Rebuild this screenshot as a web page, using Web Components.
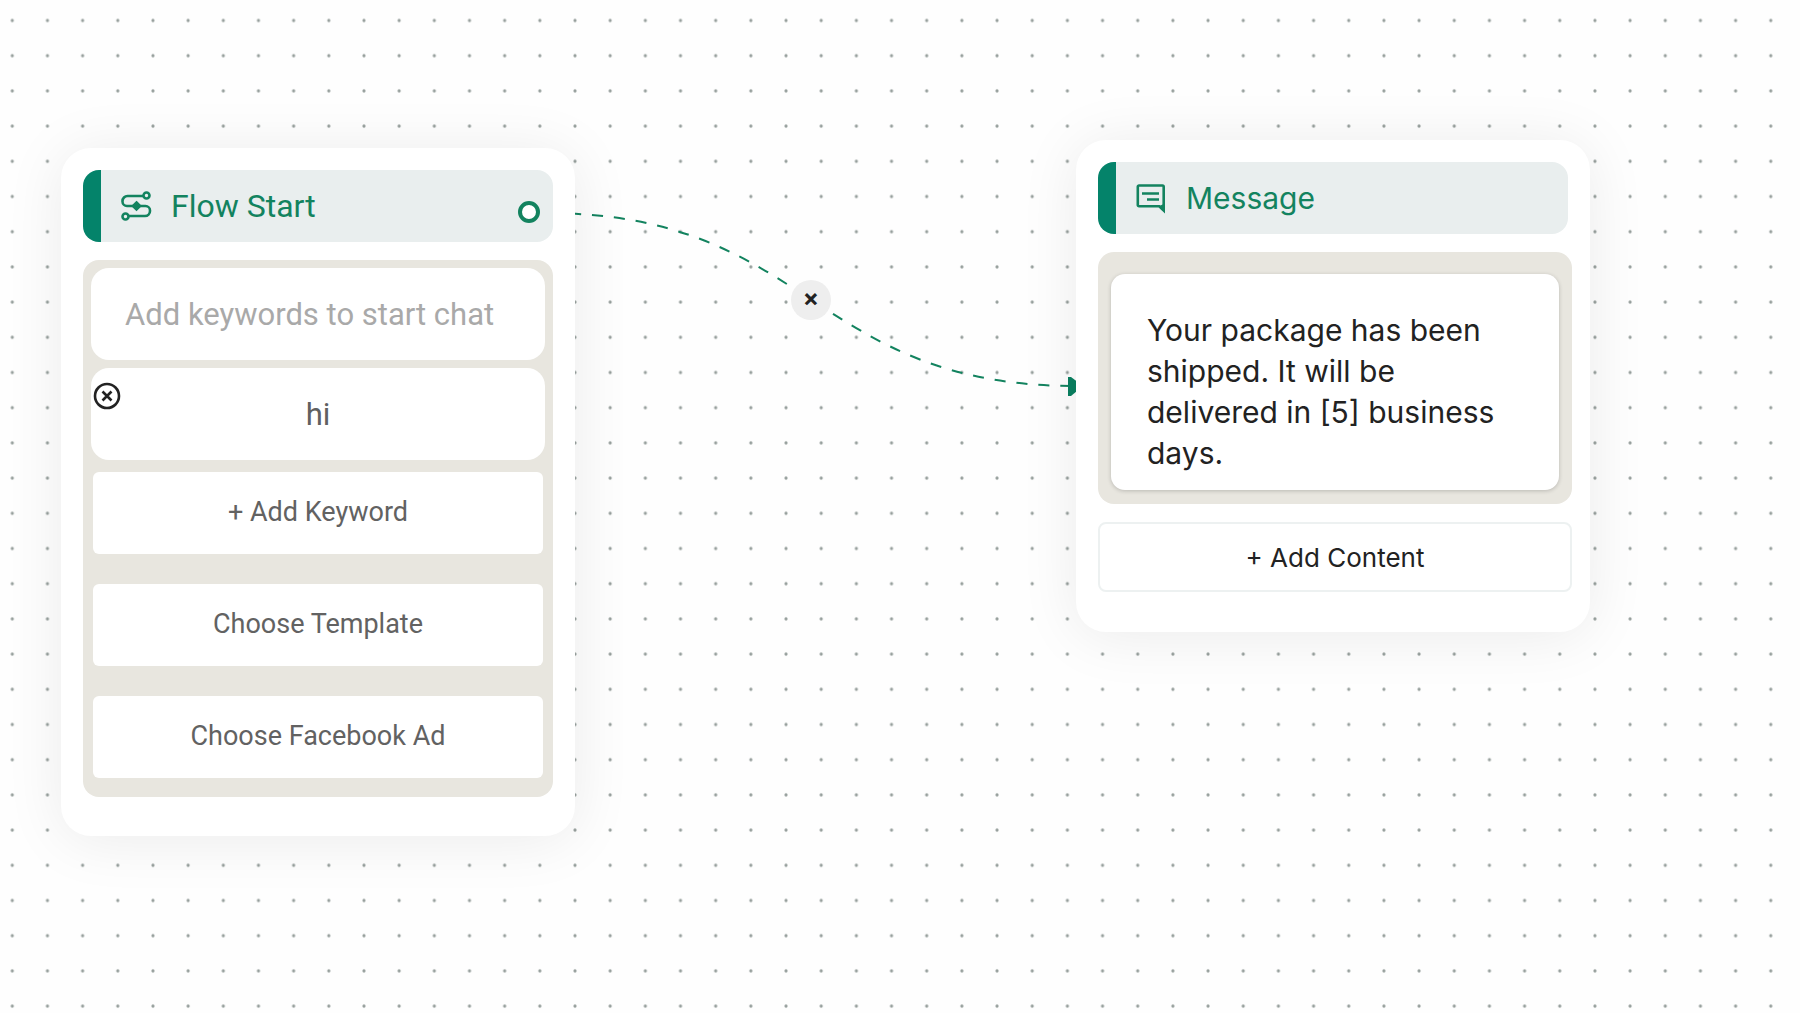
<!DOCTYPE html>
<html lang="en">
<head>
<meta charset="UTF-8">
<meta name="viewport" content="width=device-width, initial-scale=1.0">
<title>Flow Builder</title>
<style>
    body {
        margin: 0;
        background: #fefefe;
        font-family: Roboto, "Liberation Sans", sans-serif;
    }

    /* places of the nodes on the free canvas */
    #start {
        left: 61px;
        top: 148px;
        --title-size: 32px;
        --button-size: 27px;
    }

    #message {
        left: 1076px;
        top: 140px;
        --node-padding: 22px 18px 40px 22px;
        font-family: Inter, "Liberation Sans", sans-serif;
    }

    #message node-header {
        margin-right: 4px;
    }

    #remove-edge {
        left: 791px;
        top: 280px;
    }
</style>
</head>
<body>

<flow-canvas>
    <flow-edge></flow-edge>
    <edge-button id="remove-edge"></edge-button>

    <flow-node id="start">
        <node-header heading="Flow Start" port>
            <svg slot="icon" width="32" height="32" viewBox="0 0 32 32" fill="none" stroke="#13835f" stroke-width="2.6">
                <path d="M24 6H7.500a5 5 0 0 0-5 5v.500a4.500 4.500 0 0 0 4.500 4.500H25.500a4.500 4.500 0 0 1 4.500 4.500v.500a5 5 0 0 1-5 5H8"/>
                <circle cx="26.500" cy="5.500" r="3"/>
                <circle cx="5.500" cy="26.500" r="3"/>
                <path d="M16.500 12.500l3.500 3.500-3.500 3.500-3.500-3.500z" fill="#13835f"/>
            </svg>
        </node-header>
        <node-panel>
            <keyword-field placeholder="Add keywords to start chat" label="New keyword"></keyword-field>
            <keyword-field value="hi" label="Keyword" removable></keyword-field>
            <button-stack>
                <flow-button>+ Add Keyword</flow-button>
                <flow-button>Choose Template</flow-button>
                <flow-button>Choose Facebook Ad</flow-button>
            </button-stack>
        </node-panel>
    </flow-node>

    <flow-node id="message">
        <node-header heading="Message">
            <svg slot="icon" width="32" height="32" viewBox="0 0 32 32" fill="none" stroke="#13835f" stroke-width="2.600">
                <path d="M4 3.500H27.500a1.200 1.200 0 0 1 1.200 1.200V28.500l-4.500-4.300H4a1.200 1.200 0 0 1-1.200-1.200V4.700A1.200 1.200 0 0 1 4 3.500z"/>
                <path d="M28.700 29.500V22l-5 2.200z" fill="#13835f" stroke="none"/>
                <path d="M7 11.500H24M12 17.500H24" stroke-width="2.400"/>
            </svg>
        </node-header>
        <message-panel>Your package has been shipped. It will be delivered in [5] business days.</message-panel>
        <flow-button outlined>+ Add Content</flow-button>
    </flow-node>
</flow-canvas>

<script>
// gắn shadow root và clone nội dung template
const render = (el, html) => {
    const template = document.createElement("template");
    template.innerHTML = html;
    el.attachShadow({ mode: "open" });
    el.shadowRoot.appendChild(template.content.cloneNode(true));
};

class FlowCanvas extends HTMLElement {
    constructor() {
        super();
        render(this, `
        <style>
            :host {
                display: block;
                position: relative;
                min-height: 100vh;
                overflow: hidden;
            }

            .dots {
                position: absolute;
                inset: 0;
                width: 100%;
                height: 100%;
            }
        </style>
        <svg class="dots" aria-hidden="true">
            <defs>
                <pattern id="dots" x="-5.3" y="2.9" width="35.17" height="35.2" patternUnits="userSpaceOnUse">
                    <circle cx="17.6" cy="17.6" r="1.6" fill="#969f9c"/>
                </pattern>
            </defs>
            <rect width="100%" height="100%" fill="url(#dots)"/>
        </svg>
        <slot></slot>
        `);
    }
}

class FlowEdge extends HTMLElement {
    constructor() {
        super();
        render(this, `
        <style>
            :host {
                position: absolute;
                inset: 0;
            }

            svg {
                display: block;
                width: 100%;
                height: 100%;
            }
        </style>
        <svg aria-hidden="true">
            <path d="M545 213C811 213 811 386 1076 386" fill="none" stroke="#13835f" stroke-width="2" stroke-dasharray="11 11" stroke-dashoffset="-3"/>
            <path d="M1068 377h3l12 9-12 10h-3z" fill="#0a8060"/>
        </svg>
        `);
    }
}

class EdgeButton extends HTMLElement {
    constructor() {
        super();
        render(this, `
        <style>
            :host {
                position: absolute;
            }

            button {
                display: flex;
                align-items: center;
                justify-content: center;
                width: 40px;
                height: 40px;
                padding: 0 0 4px;
                border: 0;
                border-radius: 50%;
                background: #eeeeee;
                color: #222;
                font: 700 24px/24px Inter, sans-serif;
                cursor: pointer;
            }
        </style>
        <button aria-label="Remove connection">×</button>
        `);
    }
}

class FlowNode extends HTMLElement {
    constructor() {
        super();
        render(this, `
        <style>
            :host {
                position: absolute;
                display: flex;
                flex-direction: column;
                gap: 18px;
                box-sizing: border-box;
                width: 514px;
                padding: var(--node-padding, 22px 22px 39px);
                border-radius: 30px;
                background: #fff;
                box-shadow: 0 4px 60px rgba(0, 0, 0, 0.08);
            }
        </style>
        <slot></slot>
        `);
    }
}

class NodeHeader extends HTMLElement {
    constructor() {
        super();
        const port = this.hasAttribute("port") ? `<span class="port"></span>` : "";
        render(this, `
        <style>
            :host {
                display: block;
            }

            header {
                display: flex;
                align-items: center;
                gap: 19px;
                box-sizing: border-box;
                height: 72px;
                padding: 0 13px 0 19px;
                border-left: 18px solid #04836a;
                border-radius: 16px;
                background: #e9eeee;
                color: #13835f;
            }

            h2 {
                flex: 1;
                margin: 0;
                font-size: var(--title-size, 30px);
                line-height: 36px;
                font-weight: 400;
            }

            .port {
                box-sizing: border-box;
                width: 22px;
                height: 22px;
                margin-top: 12px;
                border: 4px solid #13835f;
                border-radius: 50%;
                background: #fff;
            }
        </style>
        <header>
            <slot name="icon"></slot>
            <h2>${this.getAttribute("heading")}</h2>
            ${port}
        </header>
        `);
    }
}

class NodePanel extends HTMLElement {
    constructor() {
        super();
        render(this, `
        <style>
            :host {
                display: flex;
                flex-direction: column;
                gap: 8px;
                padding: 8px 8px 19px;
                border-radius: 16px;
                background: #e8e6df;
            }
        </style>
        <slot></slot>
        `);
    }
}

class KeywordField extends HTMLElement {
    constructor() {
        super();
        const remove = `
        <button aria-label="Remove keyword">
            <svg width="28" height="28" viewBox="0 0 28 28" fill="none" stroke="#222" stroke-width="2.600">
                <circle cx="14" cy="14" r="12"/>
                <path d="M9.500 9.500l9 9M18.500 9.500l-9 9"/>
            </svg>
        </button>`;
        render(this, `
        <style>
            :host {
                display: block;
                position: relative;
            }

            input {
                display: block;
                box-sizing: border-box;
                width: 100%;
                height: 92px;
                padding: 0 34px;
                border: 0;
                border-radius: 18px;
                outline: 0;
                background: #fff;
                color: #606060;
                font: inherit;
                font-size: 31px;
                text-align: center;
            }

            input:placeholder-shown {
                text-align: left;
            }

            input::placeholder {
                color: #a9a9a9;
                opacity: 1;
            }

            /* nút xoá nằm đè lên góc trái */
            button {
                position: absolute;
                left: 2px;
                top: 14px;
                padding: 0;
                border: 0;
                background: none;
                cursor: pointer;
            }

            svg {
                display: block;
            }
        </style>
        <input type="text" aria-label="${this.getAttribute("label")}"
            placeholder="${this.getAttribute("placeholder") || ""}"
            value="${this.getAttribute("value") || ""}">
        ${this.hasAttribute("removable") ? remove : ""}
        `);
    }
}

class ButtonStack extends HTMLElement {
    constructor() {
        super();
        render(this, `
        <style>
            :host {
                display: flex;
                flex-direction: column;
                gap: 30px;
                padding: 4px 2px 0;
            }
        </style>
        <slot></slot>
        `);
    }
}

class FlowButton extends HTMLElement {
    constructor() {
        super();
        render(this, `
        <style>
            :host {
                display: block;
            }

            button {
                display: block;
                box-sizing: border-box;
                width: 100%;
                height: 82px;
                padding: 0 16px 2px;
                border: 0;
                border-radius: 6px;
                background: #fff;
                color: #626262;
                font: inherit;
                font-size: var(--button-size, 26px);
                cursor: pointer;
            }

            :host([outlined]) button {
                height: 70px;
                padding-bottom: 0;
                border: 2px solid #edf1f1;
                border-radius: 8px;
                color: #222;
            }
        </style>
        <button><slot></slot></button>
        `);
    }
}

class MessagePanel extends HTMLElement {
    constructor() {
        super();
        render(this, `
        <style>
            :host {
                display: block;
                padding: 22px 13px 14px;
                border-radius: 16px;
                background: #e8e6df;
            }

            p {
                margin: 0;
                padding: 36px 36px 16px;
                border-radius: 14px;
                background: #fff;
                box-shadow: 0 1px 4px rgba(0, 0, 0, 0.2);
                color: #222;
                font-size: 30px;
                line-height: 41px;
            }
        </style>
        <p><slot></slot></p>
        `);
    }
}

customElements.define("flow-canvas", FlowCanvas);
customElements.define("flow-edge", FlowEdge);
customElements.define("edge-button", EdgeButton);
customElements.define("flow-node", FlowNode);
customElements.define("node-header", NodeHeader);
customElements.define("node-panel", NodePanel);
customElements.define("keyword-field", KeywordField);
customElements.define("button-stack", ButtonStack);
customElements.define("flow-button", FlowButton);
customElements.define("message-panel", MessagePanel);
</script>
</body>
</html>
